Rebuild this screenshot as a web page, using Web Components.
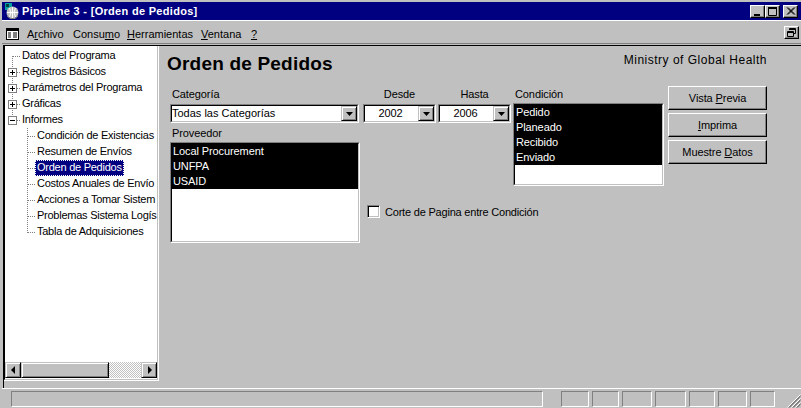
<!DOCTYPE html>
<html>
<head>
<meta charset="utf-8">
<title>PipeLine 3</title>
<style>
  html, body { margin: 0; padding: 0; background: #c0c0c0; overflow: hidden; }
</style>
</head>
<body>
<pl-window>
  <pl-titlebar slot="title">PipeLine 3 - [Orden de Pedidos]</pl-titlebar>
  <pl-menubar slot="menu"></pl-menubar>
  <pl-tree slot="tree"></pl-tree>
  <pl-order-form slot="main"></pl-order-form>
  <pl-statusbar slot="status"></pl-statusbar>
</pl-window>

<script>
const FONT = `"Liberation Sans", Arial, sans-serif`;

class PlWindow extends HTMLElement {
  constructor() {
    super();
    this.attachShadow({ mode: "open" });
    this.shadowRoot.innerHTML = `
    <style>
      :host {
        display: flex;
        flex-direction: column;
        width: 801px;
        height: 408px;
        overflow: hidden;
        background: #c0c0c0;
        color: #000;
        font: 11px ${FONT};
      }
      .work {
        display: flex;
        flex: none;
        box-sizing: border-box;
        height: 343px;
        margin-left: 3px;
        border-top: 1px solid #000;
        border-left: 1px solid #000;
      }
      .line {
        flex: none;
        height: 1px;
        background: #fff;
        margin: 0 0 2px 2px;
      }
    </style>
    <slot name="title"></slot>
    <slot name="menu"></slot>
    <div class="work">
      <slot name="tree"></slot>
      <slot name="main"></slot>
    </div>
    <div class="line"></div>
    <slot name="status"></slot>
    `;
  }
}

class PlTitlebar extends HTMLElement {
  constructor() {
    super();
    this.attachShadow({ mode: "open" });
    this.shadowRoot.innerHTML = `
    <style>
      :host {
        display: block;
        flex: none;
        padding: 2px 0 0 2px;
        height: 18px;
      }
      .bar {
        display: flex;
        align-items: center;
        height: 18px;
        background: #000080;
        color: #fff;
        font-weight: bold;
        padding: 0 3px 0 2px;
      }
      svg.app { margin-right: 2px; flex: none; }
      .text { flex: 1; letter-spacing: 0.3px; }
      .btn {
        box-sizing: border-box;
        width: 15px;
        height: 13px;
        display: block;
        background: #c0c0c0;
        border: 1px solid;
        border-color: #fff #000 #000 #fff;
        box-shadow: inset -1px -1px 0 #808080;
      }
      .close { margin-left: 3px; }
      .btn svg { display: block; }
    </style>
    <div class="bar">
      <svg class="app" width="16" height="16" viewBox="0 0 16 16">
        <rect x="1" y="0" width="7" height="7" fill="#00a0a0"/>
        <rect x="2" y="1" width="3" height="3" fill="#004040"/>
        <circle cx="8.500" cy="9.500" r="6" fill="#c0c0c0"/>
        <path d="M3 9.500h11M8.500 4v11M5.500 5q3 4.500 0 9M11.500 5q-3 4.500 0 9" stroke="#fff" fill="none"/>
        <path d="M3 13l3 2.500h5l3-2.500" stroke="#808080" fill="none"/>
      </svg>
      <span class="text"><slot></slot></span>
      <span class="btn"><svg width="13" height="11" viewBox="0 0 13 11"><rect x="3" y="8" width="6" height="2" fill="#000"/></svg></span>
      <span class="btn"><svg width="13" height="11" viewBox="0 0 13 11"><path d="M2.500 1v8.500h8v-8.500" fill="none" stroke="#000"/><rect x="2" y="1" width="9" height="2" fill="#000"/></svg></span>
      <span class="btn close"><svg width="13" height="11" viewBox="0 0 13 11"><path d="M3 1.500l7 7M4 1.500l7 7M10 1.500l-7 7M11 1.500l-7 7" stroke="#000" fill="none"/></svg></span>
    </div>
    `;
  }
}

class PlMenubar extends HTMLElement {
  constructor() {
    super();
    this.attachShadow({ mode: "open" });
    this.shadowRoot.innerHTML = `
    <style>
      :host {
        display: flex;
        align-items: center;
        flex: none;
        box-sizing: border-box;
        height: 25px;
        margin-left: 2px;
        padding: 2px 2px 0 4px;
        border-top: 1px solid #fff;
        border-bottom: 1px solid #c0c0c0;
        box-shadow: inset 0 -1px 0 #808080;
      }
      svg.doc { flex: none; margin-right: 8px; }
      .items { flex: 1; display: flex; white-space: nowrap; }
      .restore {
        box-sizing: border-box;
        width: 15px;
        height: 13px;
        margin-top: -3px;
        background: #c0c0c0;
        border: 1px solid;
        border-color: #fff #000 #000 #fff;
        box-shadow: inset -1px -1px 0 #808080;
      }
      .restore svg { display: block; }
    </style>
    <svg class="doc" width="13" height="12" viewBox="0 0 13 12">
      <rect x="0.500" y="0.500" width="12" height="11" fill="#fff" stroke="#000"/>
      <rect x="1" y="1" width="11" height="2" fill="#000"/>
      <path d="M2 5h3M2 7h3M2 9h3M7 5h4M7 7h4M7 9h4" stroke="#000"/>
    </svg>
    <div class="items">
      <span style="width:46px">A<u>r</u>chivo</span>
      <span style="width:54px">Consu<u>m</u>o</span>
      <span style="width:74px"><u>H</u>erramientas</span>
      <span style="width:50px"><u>V</u>entana</span>
      <span><u>?</u></span>
    </div>
    <div class="restore"><svg width="13" height="11" viewBox="0 0 13 11"><path d="M4.500 3V1.500h6v5H9M2.500 4.500h6v5h-6z" fill="none" stroke="#000"/><path d="M4 2.500h7M2 5.500h7" stroke="#000"/></svg></div>
    `;
  }
}

const TREE = [
  { text: "Datos del Programa", level: 0 },
  { text: "Registros Básicos", level: 0, box: "+" },
  { text: "Parámetros del Programa", level: 0, box: "+" },
  { text: "Gráficas", level: 0, box: "+" },
  { text: "Informes", level: 0, box: "-" },
  { text: "Condición de Existencias", level: 1 },
  { text: "Resumen de Envíos", level: 1 },
  { text: "Orden de Pedidos", level: 1, selected: true },
  { text: "Costos Anuales de Envío", level: 1 },
  { text: "Acciones a Tomar Sistem", level: 1 },
  { text: "Problemas Sistema Logís", level: 1 },
  { text: "Tabla de Adquisiciones", level: 1, last: true },
];

class PlTree extends HTMLElement {
  constructor() {
    super();
    this.attachShadow({ mode: "open" });
    this.shadowRoot.innerHTML = `
    <style>
      :host {
        display: block;
        box-sizing: border-box;
        flex: none;
        width: 155px;
        height: 335px;
        border-right: 1px solid #fff;
        border-bottom: 1px solid #fff;
      }
      .in {
        display: flex;
        flex-direction: column;
        box-sizing: border-box;
        height: 100%;
        background: #fff;
        border: 0 solid;
        border-width: 0 1px 1px 1px;
        border-color: #c0c0c0 #c0c0c0 #c0c0c0 #000;
      }
      ul {
        flex: 1;
        list-style: none;
        margin: 0;
        padding: 2px 0 0;
        overflow: hidden;
        min-height: 0;
      }
      li {
        display: flex;
        align-items: center;
        height: 16px;
        white-space: nowrap;
        letter-spacing: -0.25px;
      }
      svg { flex: none; display: block; }
      .label { padding: 0 2px; height: 16px; line-height: 15px; box-sizing: border-box; }
      .selected .label {
        background: #000080;
        color: #fff;
        outline: 1px dotted #fff;
        outline-offset: -1px;
      }
      .scroll { display: flex; height: 16px; flex: none; padding: 0 0 1px 0; }
      .arrow, .thumb {
        box-sizing: border-box;
        background: #c0c0c0;
        border: 1px solid;
        border-color: #c0c0c0 #000 #000 #c0c0c0;
        box-shadow: inset 1px 1px 0 #fff, inset -1px -1px 0 #808080;
        display: flex;
        align-items: center;
        justify-content: center;
      }
      .arrow { width: 16px; flex: none; }
      .thumb { width: 88px; flex: none; }
      .track {
        flex: 1;
        background-color: #fff;
        background-image: conic-gradient(#c0c0c0 25%, #fff 0 50%, #c0c0c0 0 75%, #fff 0);
        background-size: 2px 2px;
      }
    </style>
    <div class="in">
      <ul></ul>
      <div class="scroll">
        <div class="arrow"><svg width="5" height="8" viewBox="0 0 5 8"><path d="M4 0v8L0 4z" fill="#000"/></svg></div>
        <div class="thumb"></div>
        <div class="track"></div>
        <div class="arrow"><svg width="5" height="8" viewBox="0 0 5 8"><path d="M1 0v8l4-4z" fill="#000"/></svg></div>
      </div>
    </div>
    `;
    const list = this.shadowRoot.querySelector("ul");
    TREE.forEach((item, index) => {
      const li = document.createElement("li");
      if (item.selected) li.className = "selected";
      li.innerHTML = this.connector(item, index);
      const label = document.createElement("span");
      label.className = "label";
      label.textContent = item.text;
      li.appendChild(label);
      list.appendChild(li);
    });
  }

  connector(item, index) {
    const dots = `stroke="#808080" stroke-dasharray="1 1" fill="none"`;
    const w = item.level === 0 ? 15 : 30;
    let d = "";
    if (item.level === 0) {
      // trunk from the first row down to Informes
      d += index === 0 ? "M7.500 8v8" : index === 4 ? "M7.500 0v8" : "M7.500 0v16";
      d += "M8 8.500h7";
    } else {
      d += item.last ? "M22.500 0v9" : "M22.500 0v16";
      d += "M23 8.500h7";
    }
    let box = "";
    if (item.box) {
      box = `<rect x="3.500" y="4.500" width="8" height="8" fill="#fff" stroke="#808080"/>
             <path d="M5 8.500h5${item.box === "+" ? "M7.500 6v5" : ""}" stroke="#000"/>`;
    }
    return `<svg width="${w}" height="16" viewBox="0 0 ${w} 16"><path d="${d}" ${dots}/>${box}</svg>`;
  }
}

class PlCombo extends HTMLElement {
  constructor() {
    super();
    this.attachShadow({ mode: "open" });
    this.shadowRoot.innerHTML = `
    <style>
      :host {
        display: block;
        box-sizing: border-box;
        height: 19px;
        border: 1px solid;
        border-color: #808080 #fff #fff #808080;
      }
      .in {
        display: flex;
        box-sizing: border-box;
        height: 100%;
        background: #fff;
        border: 1px solid;
        border-color: #000 #c0c0c0 #c0c0c0 #000;
      }
      .val { flex: 1; line-height: 15px; white-space: nowrap; }
      :host([center]) .val { text-align: center; padding-right: 2px; letter-spacing: -0.1px; }
      .drop {
        box-sizing: border-box;
        width: 16px;
        flex: none;
        background: #c0c0c0;
        border: 1px solid;
        border-color: #c0c0c0 #000 #000 #c0c0c0;
        box-shadow: inset 1px 1px 0 #fff, inset -1px -1px 0 #808080;
        display: flex;
        align-items: center;
        justify-content: center;
      }
      svg { display: block; }
    </style>
    <div class="in">
      <div class="val"><slot></slot></div>
      <div class="drop"><svg width="7" height="4" viewBox="0 0 7 4"><path d="M0 0h7L3.500 4z" fill="#000"/></svg></div>
    </div>
    `;
  }
}

class PlListbox extends HTMLElement {
  constructor() {
    super();
    this.attachShadow({ mode: "open" });
    this.shadowRoot.innerHTML = `
    <style>
      :host {
        display: block;
        box-sizing: border-box;
        border: 1px solid;
        border-color: #808080 #fff #fff #808080;
      }
      .in {
        box-sizing: border-box;
        height: 100%;
        background: #fff;
        border: 1px solid;
        border-color: #000 #c0c0c0 #c0c0c0 #000;
      }
      .sel { background: #000; color: #fff; letter-spacing: -0.1px; }
    </style>
    <div class="in"><div class="sel"><slot></slot></div></div>
    `;
  }
}

class PlOption extends HTMLElement {
  constructor() {
    super();
    this.attachShadow({ mode: "open" });
    this.shadowRoot.innerHTML = `
    <style>
      :host { display: block; height: 15px; line-height: 15px; padding-left: 1px; white-space: nowrap; }
    </style>
    <slot></slot>
    `;
  }
}

class PlButton extends HTMLElement {
  constructor() {
    super();
    this.attachShadow({ mode: "open" });
    this.shadowRoot.innerHTML = `
    <style>
      :host {
        display: flex;
        align-items: center;
        justify-content: center;
        box-sizing: border-box;
        height: 24px;
        border: 1px solid;
        border-color: #fff #000 #000 #fff;
        box-shadow: inset -1px -1px 0 #808080;
        letter-spacing: -0.1px;
      }
    </style>
    <span><slot></slot></span>
    `;
  }
}

class PlCheckbox extends HTMLElement {
  constructor() {
    super();
    this.attachShadow({ mode: "open" });
    this.shadowRoot.innerHTML = `
    <style>
      :host { display: flex; align-items: center; white-space: nowrap; letter-spacing: -0.2px; }
      .box {
        box-sizing: border-box;
        width: 13px;
        height: 13px;
        margin-right: 5px;
        flex: none;
        background: #fff;
        border: 1px solid;
        border-color: #808080 #fff #fff #808080;
        box-shadow: inset 1px 1px 0 #000, inset -1px -1px 0 #c0c0c0;
      }
    </style>
    <span class="box"></span><slot></slot>
    `;
  }
}

class PlOrderForm extends HTMLElement {
  constructor() {
    super();
    this.attachShadow({ mode: "open" });
    this.shadowRoot.innerHTML = `
    <style>
      :host {
        display: block;
        flex: 1;
        min-width: 0;
        padding: 0 34px 0 8px;
      }
      .head {
        display: flex;
        justify-content: space-between;
        height: 40px;
      }
      h1 {
        margin: 6px 0 0;
        font-size: 19px;
        line-height: 24px;
        font-weight: bold;
        letter-spacing: 0.2px;
      }
      .org { margin-top: 6px; font-size: 12px; line-height: 16px; letter-spacing: 0.5px; }
      .body { display: flex; margin-left: 3px; }
      .label { display: block; height: 18px; line-height: 17px; padding-left: 2px; letter-spacing: -0.1px; }
      .col-a { width: 190px; flex: none; }
      .col-a .label + pl-combo + .label { height: 17px; }
      .col-a pl-listbox { height: 101px; width: 190px; }
      .col-a pl-combo { width: 189px; margin-bottom: 2px; }
      .col-b { flex: none; width: 148px; margin-left: 3px; }
      .years { display: flex; gap: 2px; }
      .years > div { width: 73px; }
      .years .label { text-align: center; padding-left: 0; }
      .years pl-combo { width: 73px; }
      pl-checkbox { margin: 82px 0 0 4px; }
      .col-c { flex: none; width: 151px; margin-left: 2px; }
      .col-c .label { height: 17px; }
      .col-c pl-listbox { height: 83px; }
      .col-d {
        flex: none;
        width: 99px;
        margin-left: 4px;
        display: flex;
        flex-direction: column;
        gap: 3px;
      }
    </style>
    <div class="head">
      <h1>Orden de Pedidos</h1>
      <div class="org">Ministry of Global Health</div>
    </div>
    <div class="body">
      <div class="col-a">
        <span class="label">Categoría</span>
        <pl-combo>Todas las Categorías</pl-combo>
        <span class="label">Proveedor</span>
        <pl-listbox>
          <pl-option>Local Procurement</pl-option>
          <pl-option>UNFPA</pl-option>
          <pl-option>USAID</pl-option>
        </pl-listbox>
      </div>
      <div class="col-b">
        <div class="years">
          <div><span class="label">Desde</span><pl-combo center>2002</pl-combo></div>
          <div><span class="label">Hasta</span><pl-combo center>2006</pl-combo></div>
        </div>
        <pl-checkbox>Corte de Pagina entre Condición</pl-checkbox>
      </div>
      <div class="col-c">
        <span class="label">Condición</span>
        <pl-listbox>
          <pl-option>Pedido</pl-option>
          <pl-option>Planeado</pl-option>
          <pl-option>Recibido</pl-option>
          <pl-option>Enviado</pl-option>
        </pl-listbox>
      </div>
      <div class="col-d">
        <pl-button>Vista <u>P</u>revia</pl-button>
        <pl-button><u>I</u>mprima</pl-button>
        <pl-button>Muestre <u>D</u>atos</pl-button>
      </div>
    </div>
    `;
  }
}

class PlStatusbar extends HTMLElement {
  constructor() {
    super();
    this.attachShadow({ mode: "open" });
    this.shadowRoot.innerHTML = `
    <style>
      :host {
        display: flex;
        flex: none;
        height: 17px;
        padding-left: 11px;
        position: relative;
      }
      .cell {
        box-sizing: border-box;
        height: 16px;
        border: 1px solid;
        border-color: #808080 #fff #fff #808080;
        flex: none;
        margin-right: 3px;
      }
      .main { width: 532px; margin-right: 18px; }
      svg { position: absolute; right: 0; bottom: 0; }
    </style>
    <div class="cell main"></div>
    <div class="cell" style="width:28px"></div>
    <div class="cell" style="width:27px"></div>
    <div class="cell" style="width:30px"></div>
    <div class="cell" style="width:31px"></div>
    <div class="cell" style="width:26px"></div>
    <div class="cell" style="width:29px"></div>
    <div class="cell" style="width:25px"></div>
    <svg width="14" height="14" viewBox="0 0 14 14">
      <path d="M13.500 .5L.5 13.500M13.500 4.500L4.500 13.500M13.500 8.500L8.500 13.500" stroke="#fff" fill="none"/>
      <path d="M13.500 1.500L1.500 13.500M13.500 2.500L2.500 13.500M13.500 5.500L5.500 13.500M13.500 6.500L6.500 13.500M13.500 9.500L9.500 13.500M13.500 10.500L10.500 13.500" stroke="#808080" fill="none"/>
    </svg>
    `;
  }
}

customElements.define("pl-window", PlWindow);
customElements.define("pl-titlebar", PlTitlebar);
customElements.define("pl-menubar", PlMenubar);
customElements.define("pl-tree", PlTree);
customElements.define("pl-combo", PlCombo);
customElements.define("pl-listbox", PlListbox);
customElements.define("pl-option", PlOption);
customElements.define("pl-button", PlButton);
customElements.define("pl-checkbox", PlCheckbox);
customElements.define("pl-order-form", PlOrderForm);
customElements.define("pl-statusbar", PlStatusbar);
</script>
</body>
</html>
